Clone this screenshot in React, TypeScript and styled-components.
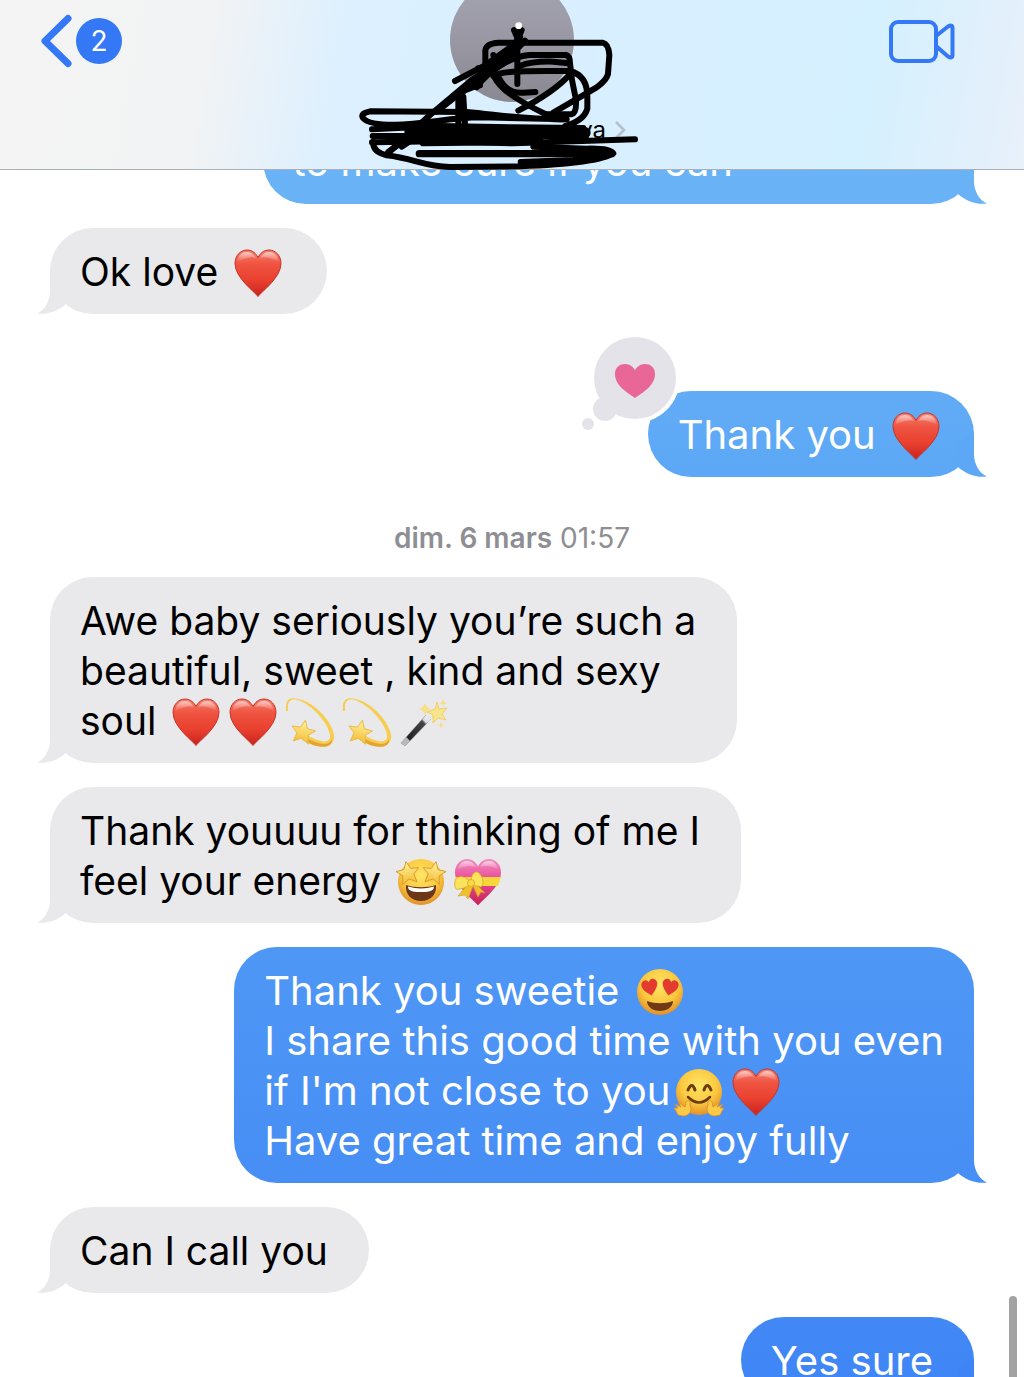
import React from 'react';
import styled, { createGlobalStyle, css } from 'styled-components';

const GlobalStyle = createGlobalStyle`
  *, *::before, *::after { box-sizing: border-box; }
  body {
    margin: 0;
    background: #fff;
    font-family: Inter, "Liberation Sans", sans-serif;
    color: #000;
  }
  button {
    border: 0;
    padding: 0;
    background: none;
    color: inherit;
    font: inherit;
    cursor: pointer;
  }
`;

/* ---------- layout ---------- */

const Screen = styled.div`
  position: relative;
  display: flex;
  flex-direction: column;
  height: 100vh;
  overflow: hidden;
`;

const Header = styled.header`
  position: relative;
  z-index: 1;
  flex: none;
  display: grid;
  grid-template-columns: 1fr auto 1fr;
  align-items: start;
  height: 170px;
  padding: 0 68px 0 40px;
  border-bottom: 1px solid #a9b1b6;
  background: linear-gradient(100deg, #f4f4f4 0%, #f2f3f4 20%, #dcf0ff 34%, #d8efff 60%, #d5f0fe 84%, #e4f0fb 97%, #e9f0fa 100%);
`;

const BackButton = styled.button`
  justify-self: start;
  display: flex;
  align-items: center;
  gap: 4px;
  margin-top: 14px;
  color: #3478f6;
`;

const UnreadBadge = styled.span`
  display: grid;
  place-items: center;
  width: 46px;
  height: 46px;
  border-radius: 50%;
  background: #3478f6;
  color: #fff;
  font-size: 28px;
  line-height: 46px;
`;

const ContactButton = styled.button`
  position: relative;
  display: flex;
  flex-direction: column;
  align-items: center;
  gap: 13px;
  width: 228px;
  margin-left: 28px;
`;

const Avatar = styled.span`
  width: 124px;
  height: 124px;
  margin-top: -22px;
  border-radius: 50%;
  background: linear-gradient(#a6a5b3, #8a8992);
`;

const ContactName = styled.span`
  display: flex;
  align-items: center;
  gap: 8px;
  align-self: flex-end;
  font-size: 24px;
  line-height: 30px;
`;

const Scribble = styled.svg`
  position: absolute;
  top: 0;
  left: -58px;
  width: 320px;
  height: 174px;
  pointer-events: none;
`;

const VideoButton = styled.button`
  justify-self: end;
  display: flex;
  margin-top: 18px;
  color: #3478f6;
`;

const Thread = styled.ol`
  flex: 1;
  display: flex;
  flex-direction: column;
  gap: 24px;
  margin: -52px 0 0;
  padding: 0 50px;
  list-style: none;
`;

const Message = styled.li<{ $sent?: boolean; $reacted?: boolean }>`
  display: flex;
  justify-content: ${p => (p.$sent ? 'flex-end' : 'flex-start')};
  padding-top: ${p => (p.$reacted ? '53px' : '0')};
`;

const Bubble = styled.div<{ $sent?: boolean; $from?: string; $to?: string; $wide?: boolean; $roomy?: boolean }>`
  position: relative;
  border-radius: 43px;
  line-height: 50px;
  white-space: pre-line;
  ${p =>
    p.$sent
      ? css`
          padding: 19px ${p.$roomy ? '41px' : '30px'} 17px 30px;
          color: #fff;
          font-size: 40px;
          background: linear-gradient(${p.$from}, ${p.$to});
        `
      : css`
          padding: 19px 41px 17px 30px;
          font-size: 39px;
          background: #e9e9eb;
        `}
  ${p => p.$wide && css`width: 77%;`}
`;

const TailShape = styled.svg<{ $sent?: boolean }>`
  position: absolute;
  bottom: 0;
  width: 30px;
  height: 44px;
  ${p => (p.$sent ? 'right: -13px;' : 'left: -13px; transform: scaleX(-1);')}
`;

const Reaction = styled.svg`
  position: absolute;
  top: -58px;
  left: -70px;
  width: 104px;
  height: 104px;
`;

const Stamp = styled.li`
  padding-top: 22px;
  color: #8e8e93;
  font-size: 28px;
  line-height: 30px;
  text-align: center;
  b { font-weight: 600; }
`;

const ScrollThumb = styled.div`
  position: absolute;
  right: 7px;
  bottom: 0;
  width: 8px;
  height: 81px;
  border-radius: 4px 4px 0 0;
  background: #a3a3a3;
`;

const EmojiSvg = styled.svg`
  width: 48px;
  height: 48px;
  margin: -4px 4px -4px 5px;
  vertical-align: -7px;
  overflow: visible;
`;

/* ---------- drawings ---------- */

const HiddenDefs = styled.svg`
  position: absolute;
  width: 0;
  height: 0;
`;

const Defs = () => (
  <HiddenDefs aria-hidden="true">
    <defs>
      <linearGradient id="red" x1="0" y1="0" x2="0" y2="1">
        <stop offset="0" stopColor="#f4806f" />
        <stop offset=".3" stopColor="#ef5441" />
        <stop offset=".65" stopColor="#e9402f" />
        <stop offset="1" stopColor="#c9231f" />
      </linearGradient>
      <linearGradient id="shine" x1="0" y1="0" x2="0" y2="1">
        <stop offset="0" stopColor="#fff" stopOpacity=".6" />
        <stop offset="1" stopColor="#fff" stopOpacity="0" />
      </linearGradient>
      <radialGradient id="face" cx=".5" cy=".35" r=".65">
        <stop offset="0" stopColor="#ffe567" />
        <stop offset=".6" stopColor="#fbc93f" />
        <stop offset="1" stopColor="#e2902a" />
      </radialGradient>
      <linearGradient id="gold" x1="0" y1="0" x2="0" y2="1">
        <stop offset="0" stopColor="#fff3a0" />
        <stop offset="1" stopColor="#f3bd34" />
      </linearGradient>
      <linearGradient id="pink" x1="0" y1="0" x2="0" y2="1">
        <stop offset="0" stopColor="#f490c0" />
        <stop offset=".4" stopColor="#e8529c" />
        <stop offset="1" stopColor="#c81f57" />
      </linearGradient>
      <linearGradient id="stick" x1="0" y1="1" x2="1" y2="0">
        <stop offset="0" stopColor="#d9d9d9" />
        <stop offset=".2" stopColor="#8a8a8a" />
        <stop offset=".25" stopColor="#222" />
        <stop offset=".75" stopColor="#444" />
        <stop offset=".8" stopColor="#ddd" />
      </linearGradient>
    </defs>
  </HiddenDefs>
);

const HEART = 'M24 47.500C21 43 1 29 1 14.500C1 6.500 6.500 1 13 1C18.500 1 22 4.500 24 8.500C26 4.500 29.500 1 35 1C41.500 1 47 6.500 47 14.500C47 29 27 43 24 47.500Z';
const STAR = 'M0 -10L3 -3.500L10 -3L4.800 1.700L6.400 9L0 5.200L-6.400 9L-4.800 1.700L-10 -3L-3 -3.500Z';

const Heart = () => (
  <EmojiSvg viewBox="0 0 48 48" role="img" aria-label="red heart">
    <path d={HEART} fill="url(#red)" stroke="#c5362b" strokeWidth="1" />
    <path d="M3.500 13C4 6 8 3 13 3C18 3 20 6 22 9C16 7 9 10 3.500 13Z" fill="url(#shine)" />
    <path d="M44.500 13C44 6 40 3 35 3C30 3 28 6 26 9C32 7 39 10 44.500 13Z" fill="url(#shine)" />
  </EmojiSvg>
);

const Dizzy = () => (
  <EmojiSvg viewBox="0 0 48 48" role="img" aria-label="dizzy">
    <path d="M0 13C-1 2 3 -1 10 .5C23 2 41 16 47 33C52 46 41 51 27 47L15 41L17 35C26 40 41 48 44 40C46 32 31 9 12 2C5 -.5 1 3 2 13Z" fill="#f6cd4e" />
    <path d="M18 39C29 45 43 50 46 41C47 50 36 50 27 47L17 42Z" fill="#e5a42e" />
    <path d={STAR} transform="translate(17 34) rotate(12) scale(1.2)" fill="url(#gold)" stroke="#e9b53d" strokeWidth=".7" strokeLinejoin="round" />
  </EmojiSvg>
);

const Wand = () => (
  <EmojiSvg viewBox="0 0 48 48" role="img" aria-label="magic wand">
    <path d="M1 45L26 17L31 21L5 48Z" fill="url(#stick)" stroke="#777" strokeWidth=".5" />
    <path d="M1 45L6 39L10 43L5 48Z" fill="#b9b9b9" />
    <path d="M24 20L27 16L32 20L28 24Z" fill="#e8e8e8" />
    <path d="M37 4L39 11L47 10L42 16L46 22L38 20L33 25L33 17L27 14L35 11Z" fill="#fae48a" stroke="#ecca58" strokeWidth=".8" />
    <path d="M25 5L27 9L31 11L27 13L25 17L23 13L19 11L23 9ZM43 1L44 4L47 5L44 6L43 9L42 6L39 5L42 4ZM41 24L42 26L44 27L42 28L41 30L40 28L38 27L40 26Z" fill="#f7df83" />
  </EmojiSvg>
);

const StarStruck = () => (
  <EmojiSvg viewBox="0 0 48 48" role="img" aria-label="star-struck">
    <circle cx="24" cy="24" r="23" fill="url(#face)" />
    <path d="M9 27C18 30 30 30 39 27C40 36 34 43 24 43C14 43 8 36 9 27Z" fill="#6b3717" />
    <path d="M11 28.500C20 31 28 31 37 28.500C37 32 35 34 24 34C13 34 11 32 11 28.500Z" fill="#fff" />
    <path d={STAR} transform="translate(11 15) rotate(-10) scale(1.150)" fill="url(#gold)" stroke="#d99a2b" strokeWidth=".8" />
    <path d={STAR} transform="translate(37 15) rotate(10) scale(1.150)" fill="url(#gold)" stroke="#d99a2b" strokeWidth=".8" />
  </EmojiSvg>
);

const HeartRibbon = () => (
  <EmojiSvg viewBox="0 0 48 48" role="img" aria-label="heart with ribbon">
    <path d={HEART} fill="url(#pink)" />
    <path d="M4 12C5 5 9 3 13 3C18 3 20 6 22 9C16 7 9 8 4 12ZM44 12C43 5 39 3 35 3C30 3 28 6 26 9C32 7 39 8 44 12Z" fill="url(#shine)" />
    <path d="M1 19H47L44 28H4Z" fill="#f7d63c" />
    <path d="M15 25L4 38L11 37L14 41L19 28L24 39L27 34L31 35L20 24Z" fill="#f0bf2c" stroke="#d69c24" strokeWidth=".6" />
    <path d="M16 24C8 15 2 19 1 23C0 29 2 33 5 31C10 31 14 28 16 26ZM17 24C17 15 22 12 25 15C30 20 30 27 27 29C23 28 19 27 17 26Z" fill="#fbe45a" stroke="#d9a62b" strokeWidth=".8" />
    <circle cx="17" cy="25" r="3.500" fill="#f9da48" stroke="#d9a62b" strokeWidth=".8" />
  </EmojiSvg>
);

const HeartEyes = () => (
  <EmojiSvg viewBox="0 0 48 48" role="img" aria-label="smiling face with heart eyes">
    <circle cx="24" cy="24" r="23" fill="url(#face)" />
    <path d={HEART} transform="translate(4 13) rotate(-12) scale(.35)" fill="#e33b30" />
    <path d={HEART} transform="translate(27.500 9.500) rotate(12) scale(.35)" fill="#e33b30" />
    <path d="M11 33C19 36 29 36 37 33C37 39 31 43 24 43C17 43 11 39 11 33Z" fill="#6f3a15" />
  </EmojiSvg>
);

const Hugging = () => (
  <EmojiSvg viewBox="0 0 48 48" role="img" aria-label="hugging face">
    <circle cx="24" cy="24" r="23" fill="url(#face)" />
    <path d="M13 22Q17 13 20 22M29 22Q32 13 36 22" fill="none" stroke="#6b3b12" strokeWidth="3" strokeLinecap="round" />
    <path d="M13 29Q24 40 35 29" fill="none" stroke="#6b3b12" strokeWidth="2.500" strokeLinecap="round" />
    <path d="M11 34C13 31 16 33 15 37C18 43 14 48 8 48L3 47L1 43L-1 40L3 40L0 36L6 39L3 34L10 39Z" fill="#fbca48" stroke="#d98a25" strokeWidth=".8" />
    <path d="M37 34C35 31 32 33 33 37C30 43 34 48 40 48L45 47L47 43L49 40L45 40L48 36L42 39L45 34L38 39Z" fill="#fbca48" stroke="#d98a25" strokeWidth=".8" />
  </EmojiSvg>
);

const Tail = ({ sent, color }: { sent?: boolean; color: string }) => (
  <TailShape $sent={sent} viewBox="0 0 30 44" aria-hidden="true">
    <path d="M1 34C9 41 19 45 30 43.500C22 40 17 31 17 21V0L1 10Z" fill={color} />
  </TailShape>
);

const ScribbleArt = () => (
  <Scribble viewBox="0 0 960 522" aria-hidden="true">
    <g fill="none" stroke="#000" strokeWidth="18" strokeLinecap="round" strokeLinejoin="round">
      <path d="M436 200V150Q440 130 475 128H788Q806 132 808 165L804 222Q800 240 770 262L640 338" />
      <path d="M410 262C450 205 520 168 570 165H678Q690 168 690 190L696 240L708 300Q710 340 694 343H620" />
      <path d="M540 198C570 185 600 184 640 185L686 190" />
      <path d="M460 228C480 214 540 213 620 213H690C725 222 742 250 742 290V326Q732 362 676 378" />
      <path d="M690 222C660 258 600 298 535 332" />
      <path d="M462 228C480 272 550 310 622 345" />
      <path d="M478 236Q502 282 550 278L586 276" />
      <path d="M532 92V252M522 90L534 118L545 90M555 122L500 180L440 225" />
      <path d="M345 243L435 196L530 128" />
      <path d="M145 458L270 345L395 240L470 190L540 112" />
      <path d="M290 335L420 232L500 185M460 165L470 200L415 205" />
      <path d="M355 385V292Q365 268 420 256M375 375L370 290" />
      <path d="M680 358C560 360 480 345 380 336L90 334Q60 340 69 354Q85 374 160 374C250 375 330 352 420 352L680 358" />
      <path d="M96 388L300 378L520 382L730 384M98 408H738M96 427L300 424L520 430L885 418" />
      <path d="M210 395L735 398" strokeWidth="34" />
      <path d="M250 428L600 424" strokeWidth="22" />
      <path d="M100 425Q97 456 140 466C220 475 255 500 330 501L540 499C680 494 790 480 820 460Q810 444 740 446L580 440" />
      <path d="M238 461H815" strokeWidth="22" />
      <path d="M542 486L700 480L800 468M145 456L240 385M185 440L290 370" />
    </g>
    <circle cx="536" cy="77" r="10" fill="#fff" />
  </Scribble>
);

/* ---------- page ---------- */

export default function App() {
  return (
    <Screen>
      <GlobalStyle />
      <Defs />
      <Header>
        <BackButton aria-label="Back, 2 unread">
          <svg width="32" height="54" viewBox="0 0 32 54" fill="none" aria-hidden="true">
            <path d="M28 4.500L5 27L28 49.500" stroke="currentColor" strokeWidth="7" strokeLinecap="round" strokeLinejoin="round" />
          </svg>
          <UnreadBadge>2</UnreadBadge>
        </BackButton>
        <ContactButton aria-label="Contact details">
          <Avatar />
          <ContactName>
            va
            <svg width="12" height="20" viewBox="0 0 12 20" fill="none" aria-hidden="true">
              <path d="M2 2L10 10L2 18" stroke="#b2c1cc" strokeWidth="2.500" />
            </svg>
          </ContactName>
          <ScribbleArt />
        </ContactButton>
        <VideoButton aria-label="Video call">
          <svg width="68" height="48" viewBox="0 0 68 48" fill="none" stroke="currentColor" strokeWidth="4" strokeLinejoin="round" aria-hidden="true">
            <rect x="3" y="4" width="45" height="39" rx="7" />
            <path d="M48 18L60 8.500Q64.500 6 64.500 10V37Q64.500 41 60 38.500L48 28" />
          </svg>
        </VideoButton>
      </Header>

      <Thread>
        <Message $sent>
          <Bubble $sent $wide $from="#6cb4f7" $to="#6ab2f6">
            to make sure if you can
            <Tail sent color="#6ab2f6" />
          </Bubble>
        </Message>
        <Message>
          <Bubble>
            Ok love <Heart />
            <Tail color="#e9e9eb" />
          </Bubble>
        </Message>
        <Message $sent $reacted>
          <Bubble $sent $from="#62abf6" $to="#5ca8f6">
            Thank you <Heart />
            <Tail sent color="#5ca8f6" />
            <Reaction viewBox="0 0 104 104" role="img" aria-label="Loved">
              <circle cx="57" cy="45" r="45" fill="#fff" />
              <circle cx="57" cy="45" r="41" fill="#e4e3e9" />
              <circle cx="27" cy="76" r="12" fill="#e4e3e9" />
              <circle cx="10" cy="91" r="6" fill="#e4e3e9" />
              <path d="M57 65C50 60 37 53 37 41C37 34 42 31 47 31C52 31 55 34 57 37C59 34 62 31 67 31C72 31 77 34 77 41C77 53 64 60 57 65Z" fill="#e96797" />
            </Reaction>
          </Bubble>
        </Message>
        <Stamp>
          <b>dim. 6 mars</b> 01:57
        </Stamp>
        <Message>
          <Bubble>
            {'Awe baby seriously you’re such a\nbeautiful, sweet , kind and sexy\nsoul '}
            <Heart />
            <Heart />
            <Dizzy />
            <Dizzy />
            <Wand />
            <Tail color="#e9e9eb" />
          </Bubble>
        </Message>
        <Message>
          <Bubble>
            {'Thank youuuu for thinking of me I\nfeel your energy '}
            <StarStruck />
            <HeartRibbon />
            <Tail color="#e9e9eb" />
          </Bubble>
        </Message>
        <Message $sent>
          <Bubble $sent $from="#4f97f5" $to="#478ef5">
            {'Thank you sweetie '}
            <HeartEyes />
            {"\nI share this good time with you even\nif I'm not close to you"}
            <Hugging />
            <Heart />
            {'\nHave great time and enjoy fully'}
            <Tail sent color="#478ef5" />
          </Bubble>
        </Message>
        <Message>
          <Bubble>
            Can I call you
            <Tail color="#e9e9eb" />
          </Bubble>
        </Message>
        <Message $sent>
          <Bubble $sent $roomy $from="#4289f6" $to="#3e84f6">
            Yes sure
            <Tail sent color="#3e84f6" />
          </Bubble>
        </Message>
      </Thread>
      <ScrollThumb />
    </Screen>
  );
}
